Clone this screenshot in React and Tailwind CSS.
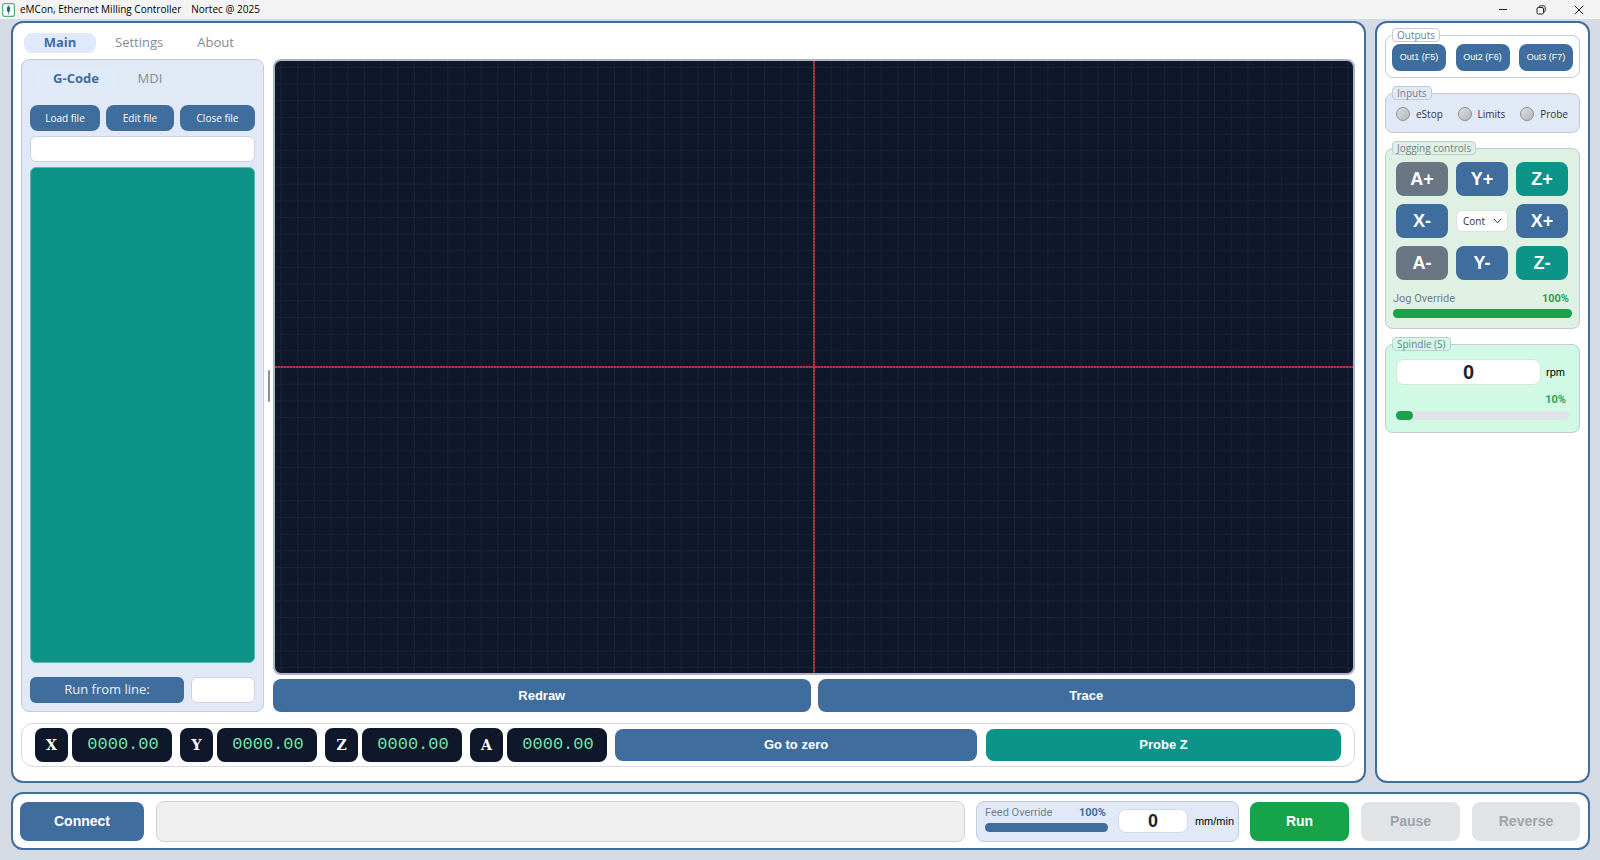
import { useState } from 'react';

const WindowBar = () => (
  <header className="flex h-[19px] items-center bg-[#f3f3f3] text-[10px] text-black">
    <svg className="ml-[2px] h-[14px] w-[13px]" viewBox="0 0 13 14">
      <rect x="0.6" y="0.6" width="11.8" height="12.8" rx="2" fill="#fff" stroke="#4fb37e" strokeWidth="1.2" />
      <path d="M6.5 2.2 L8.2 5 L8 8 L6.8 9.4 V11.6 H6.2 V9.4 L5 8 L4.8 5 Z" fill="#1f6f6a" />
    </svg>
    <h1 className="ml-[5px]">eMCon, Ethernet Milling Controller</h1>
    <span className="ml-[10px]">Nortec @ 2025</span>
    <div className="ml-auto flex items-center gap-[28px] pr-4">
      <button aria-label="Minimize">
        <svg className="h-[10px] w-[10px]" viewBox="0 0 10 10" fill="none" stroke="#222">
          <path d="M1 4.5 H9" />
        </svg>
      </button>
      <button aria-label="Restore">
        <svg className="h-[10px] w-[10px]" viewBox="0 0 10 10" fill="none" stroke="#222">
          <rect x="1" y="2.5" width="6.5" height="6.5" rx="1.4" />
          <path d="M3 2.2 Q3 0.8 4.4 0.8 H7.4 Q9.2 0.8 9.2 2.6 V5.6 Q9.2 7 7.8 7" />
        </svg>
      </button>
      <button aria-label="Close">
        <svg className="h-[10px] w-[10px]" viewBox="0 0 10 10" fill="none" stroke="#222">
          <path d="M0.8 0.8 L9.2 9.2 M9.2 0.8 L0.8 9.2" />
        </svg>
      </button>
    </div>
  </header>
);

const Group = ({ title, className, legendClass, children }) => (
  <fieldset className={`min-w-0 rounded-lg border border-[#c3ccd6] px-[6px] ${className}`}>
    <legend className={`h-[14px] rounded border border-[#c3ccd6] px-1 text-[10px] leading-3 text-[#6f7f90] ${legendClass}`}>
      {title}
    </legend>
    {children}
  </fieldset>
);

const Override = ({ label, value, onChange, fill, track }) => (
  <div className={`relative h-[9px] rounded-full ${track}`}>
    <div className={`h-full rounded-full ${fill}`} style={{ width: `${value}%` }}></div>
    <input
      type="range"
      min="0"
      max="100"
      aria-label={label}
      value={value}
      onChange={(e) => onChange(Number(e.target.value))}
      className="absolute inset-0 h-full w-full cursor-pointer opacity-0"
    />
  </div>
);

const JogButton = ({ color, children }) => (
  <button className={`h-[34px] rounded-lg text-lg font-bold text-white ${color}`}>{children}</button>
);

const FilePanel = () => {
  const [mode, setMode] = useState('G-Code');

  return (
    <section className="flex w-[243px] shrink-0 flex-col rounded-lg border border-[#c0cbdb] bg-[#e2e9f6] px-2 pt-[9px] pb-2">
      <nav className="flex px-[5px] text-[13px]">
        {['G-Code', 'MDI'].map((item) => (
          <button
            key={item}
            onClick={() => setMode(item)}
            className={`h-[20px] rounded-lg ${mode === item ? 'w-[82px] bg-[#dfeafb] font-bold text-[#3f6d9e]' : 'w-[66px] text-[#7f8b99]'}`}
          >
            {item}
          </button>
        ))}
      </nav>
      <div className="mt-4 flex gap-[6px] text-[10px] text-white">
        <button className="h-[26px] w-[70px] rounded-lg bg-[#3f6d9e]">Load file</button>
        <button className="h-[26px] w-[68px] rounded-lg bg-[#3f6d9e]">Edit file</button>
        <button className="h-[26px] grow rounded-lg bg-[#3f6d9e]">Close file</button>
      </div>
      <input aria-label="File name" className="mt-[5px] h-[26px] w-full rounded-md border border-[#ccd3de] bg-white px-2 text-[11px]" />
      <textarea
        aria-label="G-Code"
        className="mt-[5px] block w-full grow resize-none rounded-md border border-[#5fb5ab] bg-[#0d9488] p-2 text-[11px] text-white"
      />
      <div className="mt-[14px] flex gap-[7px]">
        <button className="h-[26px] w-[154px] shrink-0 rounded-md bg-[#3f6d9e] text-[13px] text-[#e8eff8]">Run from line:</button>
        <input aria-label="Line number" className="h-[26px] w-full min-w-0 rounded-md border border-[#ccd3de] bg-white px-2 text-[13px]" />
      </div>
    </section>
  );
};

// toolpath preview, the origin sits in the middle of the view
const Preview = () => (
  <div className="min-h-64 grow overflow-hidden rounded-lg border-2 border-[#aab4c2] bg-[#0f172a]">
    <svg width="100%" height="100%" className="block">
      <defs>
        <pattern id="grid" width="16.67" height="16.67" patternUnits="userSpaceOnUse">
          <path d="M0.5 0 V16.67 M0 0.5 H16.67" stroke="#182337" fill="none" />
        </pattern>
      </defs>
      <svg x="50%" y="50%" overflow="visible">
        <rect x="-2000" y="-2000" width="4000" height="4000" fill="url(#grid)" />
      </svg>
      <g strokeWidth="2">
        <line x1="0" y1="50%" x2="100%" y2="50%" stroke="#7d2937" />
        <line x1="50%" y1="0" x2="50%" y2="100%" stroke="#7d2937" />
      </g>
      <g strokeWidth="1" strokeDasharray="2 1">
        <line x1="0" y1="50%" x2="100%" y2="50%" stroke="#e0454f" />
        <line x1="50%" y1="0" x2="50%" y2="100%" stroke="#e0454f" />
      </g>
    </svg>
  </div>
);

const Readout = () => (
  <section className="flex h-[44px] items-center gap-2 rounded-xl border border-[#d5dae1] px-[13px]">
    {['X', 'Y', 'Z', 'A'].map((axis) => (
      <div key={axis} className="flex gap-1">
        <div className="flex h-[34px] w-[33px] items-center justify-center rounded-lg bg-[#0f172a] font-['DejaVu_Serif',serif] text-sm font-bold text-white">
          {axis}
        </div>
        <output className="flex h-[34px] w-[100px] items-center justify-center rounded-lg bg-[#0f172a] pl-[2px] font-['Liberation_Mono',monospace] text-[17px] text-[#6ee7a8]">
          0000.00
        </output>
      </div>
    ))}
    <div className="flex grow gap-[9px] font-['Liberation_Sans',sans-serif] text-[13px] font-bold text-white">
      <button className="h-8 flex-[51] rounded-lg bg-[#3f6d9e]">Go to zero</button>
      <button className="h-8 flex-[50] rounded-lg bg-[#0d9488]">Probe Z</button>
    </div>
  </section>
);

const SidePanel = () => {
  const [jog, setJog] = useState(100);
  const [spindle, setSpindle] = useState(10);

  return (
    <aside className="flex w-[215px] shrink-0 flex-col gap-2 rounded-xl border-2 border-[#3f6d9e] bg-white px-2 pt-[5px]">
      <Group title="Outputs" legendClass="bg-white" className="bg-white pb-[6px]">
        <div className="mt-[2px] flex justify-between font-['Liberation_Sans',sans-serif] text-[9px] text-white">
          <button className="h-[27px] w-[54px] rounded-lg bg-[#3f6d9e]">Out1 (F5)</button>
          <button className="h-[27px] w-[54px] rounded-lg bg-[#3f6d9e]">Out2 (F6)</button>
          <button className="h-[27px] w-[54px] rounded-lg bg-[#3f6d9e]">Out3 (F7)</button>
        </div>
      </Group>

      <Group title="Inputs" legendClass="bg-[#e2e9f6]" className="bg-[#e2e9f6] pb-[10px]">
        <ul className="mt-[6px] flex justify-between pr-[5px] pl-1 text-[10px] leading-4 text-[#2c3644]">
          {['eStop', 'Limits', 'Probe'].map((name) => (
            <li key={name} className="flex items-center gap-[6px]">
              <span className="h-[14px] w-[14px] rounded-full border border-[#8c8f94] bg-linear-to-br from-[#dcdee1] to-[#b4b7bc]"></span>
              {name}
            </li>
          ))}
        </ul>
      </Group>

      <Group title="Jogging controls" legendClass="bg-[#dff1e2]" className="bg-[#dff1e2] pb-[10px]">
        <div className="mt-[7px] grid grid-cols-3 items-center gap-2 pr-[5px] pl-1 font-['Liberation_Sans',sans-serif]">
          <JogButton color="bg-[#6b7685]">A+</JogButton>
          <JogButton color="bg-[#3f6d9e]">Y+</JogButton>
          <JogButton color="bg-[#0d9488]">Z+</JogButton>
          <JogButton color="bg-[#3f6d9e]">X-</JogButton>
          <div className="relative">
            <select
              aria-label="Jog step"
              className="block h-[22px] w-full appearance-none rounded-md border border-[#d9e0e4] bg-white pl-[6px] font-['Open_Sans',sans-serif] text-[10px] text-[#2c3644]"
            >
              <option>Cont</option>
              <option>1.0</option>
              <option>0.1</option>
            </select>
            <svg className="pointer-events-none absolute top-2 right-[6px] h-[6px] w-[9px]" viewBox="0 0 9 6" fill="none" stroke="#333">
              <path d="M0.8 0.8 L4.5 4.8 L8.2 0.8" />
            </svg>
          </div>
          <JogButton color="bg-[#3f6d9e]">X+</JogButton>
          <JogButton color="bg-[#6b7685]">A-</JogButton>
          <JogButton color="bg-[#3f6d9e]">Y-</JogButton>
          <JogButton color="bg-[#0d9488]">Z-</JogButton>
        </div>
        <div className="px-px font-['Roboto',sans-serif]">
          <div className="mt-[11px] mb-[2px] flex justify-between pr-[3px] text-[11px] leading-4">
            <span className="text-[#6f7f90]">Jog Override</span>
            <span className="font-bold text-[#2c9f50]">{jog}%</span>
          </div>
          <Override label="Jog Override" value={jog} onChange={setJog} fill="bg-[#16a34a]" track="bg-[#e1e3e8]" />
        </div>
      </Group>

      <Group title="Spindle (S)" legendClass="bg-[#d0fae5]" className="bg-[#d0fae5] pb-3">
        <div className="px-1 text-[11px]">
          <label className="mt-2 flex items-center gap-[5px] pr-1 font-['Liberation_Sans',sans-serif] text-black">
            <input
              defaultValue="0"
              className="h-[26px] min-w-0 grow rounded-lg border border-[#d3e6de] bg-white text-center text-xl font-bold text-[#1b2430]"
            />
            rpm
          </label>
          <div className="mt-[7px] mb-[3px] pr-[3px] text-right font-['Roboto',sans-serif] leading-4 font-bold text-[#2c9f50]">{spindle}%</div>
          <Override label="Spindle override" value={spindle} onChange={setSpindle} fill="bg-[#16a34a]" track="bg-[#e1e3e8]" />
        </div>
      </Group>
    </aside>
  );
};

const BottomBar = () => {
  const [feed, setFeed] = useState(100);

  return (
    <footer className="flex h-[58px] items-center rounded-xl border-2 border-[#3f6d9e] bg-white pr-2 pl-[7px] font-['Liberation_Sans',sans-serif]">
      <button className="h-[39px] w-[124px] rounded-lg bg-[#3f6d9e] text-sm font-bold text-white">Connect</button>
      <output aria-label="Status" className="ml-3 h-[41px] grow rounded-lg border border-[#cfd2d6] bg-[#efefef]"></output>
      <section className="mx-[11px] flex h-[41px] w-[263px] items-center rounded-lg border border-[#c0cbdb] bg-[#e2e9f6] pr-1 pl-2">
        <div className="w-[123px] pb-[5px]">
          <div className="mb-[2px] flex justify-between pr-[2px] font-['Roboto',sans-serif] text-[11px] leading-4">
            <span className="text-[#6f7f90]">Feed Override</span>
            <span className="font-bold text-[#3f6d9e]">{feed}%</span>
          </div>
          <Override label="Feed Override" value={feed} onChange={setFeed} fill="bg-[#3f6d9e]" track="bg-[#d0d7e2]" />
        </div>
        <label className="ml-[10px] flex grow items-center justify-between text-[11px] text-black">
          <input
            defaultValue="0"
            className="h-[24px] w-[70px] rounded-lg border border-[#d5dce8] bg-white text-center text-lg font-bold text-[#1b2430]"
          />
          mm/min
        </label>
      </section>
      <div className="flex gap-3 text-sm font-bold">
        <button className="h-[39px] w-[99px] rounded-lg bg-[#16a34a] text-white">Run</button>
        <button disabled className="h-[39px] w-[99px] rounded-lg bg-[#e1e4e7] text-[#9da3aa]">Pause</button>
        <button disabled className="h-[39px] w-[108px] rounded-lg bg-[#e1e4e7] text-[#9da3aa]">Reverse</button>
      </div>
    </footer>
  );
};

export default function App() {
  const [tab, setTab] = useState('Main');

  return (
    <div className="flex min-h-screen flex-col bg-[#d5dbe4] font-['Open_Sans',sans-serif]">
      <WindowBar />
      <div className="flex grow flex-col gap-[9px] pt-[2px] pr-[10px] pb-[10px] pl-[11px]">
        <div className="flex grow gap-[9px]">
          <main className="flex min-w-0 grow flex-col rounded-xl border-2 border-[#3f6d9e] bg-white pt-[10px] pr-[9px] pb-[14px] pl-2">
            <nav className="flex gap-1 px-[3px] text-[13px]">
              {['Main', 'Settings', 'About'].map((item) => (
                <button
                  key={item}
                  onClick={() => setTab(item)}
                  className={`h-[20px] rounded-lg ${tab === item ? 'w-[72px] bg-[#e0eafc] font-bold text-[#3f6d9e]' : 'px-[15px] text-[#7f8b99]'}`}
                >
                  {item}
                </button>
              ))}
            </nav>
            <div className="mt-[6px] flex grow">
              <FilePanel />
              <div className="flex w-[9px] items-center justify-center">
                <div className="h-8 w-[2px] rounded-full bg-[#8d929c]"></div>
              </div>
              <div className="flex min-w-0 grow flex-col gap-1">
                <Preview />
                <div className="flex gap-[7px] font-['Liberation_Sans',sans-serif] text-[13px] font-bold text-white">
                  <button className="h-[33px] flex-1 rounded-lg bg-[#3f6d9e]">Redraw</button>
                  <button className="h-[33px] flex-1 rounded-lg bg-[#3f6d9e]">Trace</button>
                </div>
              </div>
            </div>
            <div className="mt-[11px]">
              <Readout />
            </div>
          </main>
          <SidePanel />
        </div>
        <BottomBar />
      </div>
    </div>
  );
}
